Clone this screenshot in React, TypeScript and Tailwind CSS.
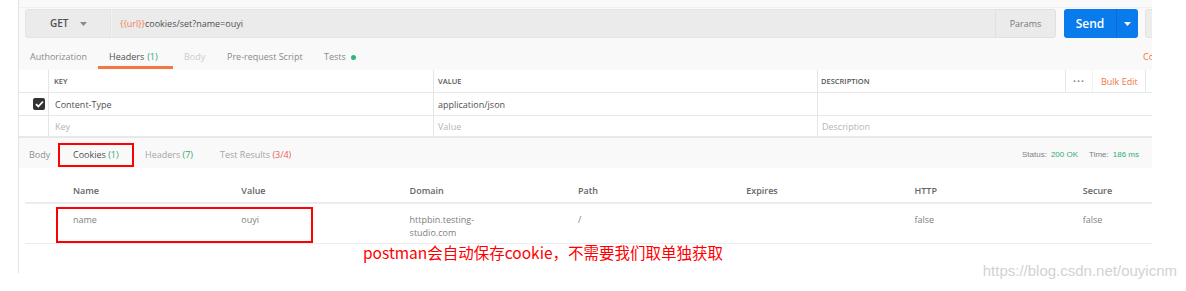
const reqTabs = [
  { label: 'Authorization', w: 'w-[79px]', cls: 'text-[#8a8a8a]' },
  { label: 'Headers', count: '(1)', w: 'w-[75px]', cls: 'text-[#505050]', active: true },
  { label: 'Body', w: 'w-[43px]', cls: 'text-[#cccccc]' },
  { label: 'Pre-request Script', w: 'w-[97px]', cls: 'text-[#8a8a8a]' },
]

const cookieCols = ['Name', 'Value', 'Domain', 'Path', 'Expires', 'HTTP', 'Secure']

function Caret({ className }: { className: string }) {
  return (
    <svg width="7" height="4" viewBox="0 0 7 4" className={className}>
      <path d="M0 0h7L3.5 4z" fill="currentColor" />
    </svg>
  )
}

function Check() {
  return (
    <div className="w-[12px] h-[12px] rounded-[2px] bg-[#333333] flex items-center justify-center">
      <svg width="9" height="8" viewBox="0 0 9 8">
        <path d="M1 4.2l2.3 2.3L8 1.5" stroke="white" strokeWidth="1.8" fill="none" />
      </svg>
    </div>
  )
}

export default function App() {
  return (
    <div className="relative w-[1186px] h-[291px] bg-white overflow-hidden font-['Open_Sans',sans-serif]">
      <div className="ml-[18px] w-[1134px] h-[273px] border-l border-[#e3e3e3] bg-[#f9f9f9] overflow-hidden flex flex-col">
        {/* request url bar */}
        <div className="border-t border-[#f1f1f1] mt-[7px] pt-[1px]" />
        <div className="flex h-[29px] ml-[6px] shrink-0">
          <div className="w-[86px] shrink-0 flex items-center bg-[#ebebeb] border border-[#e4e4e4] rounded-l-[3px] pl-[24px]">
            <span className="text-[10px] text-[#505050] font-semibold">GET</span>
            <Caret className="ml-[11px] text-[#8a8a8a]" />
          </div>
          <div className="w-[884px] shrink-0 flex items-center bg-[#ebebeb] border-y border-l border-[#e4e4e4] border-l-[#f2f2f2] pl-[8px] text-[9px] whitespace-nowrap">
            <span className="text-[#f0814f]">{'{{url}}'}</span>
            <span className="text-[#505050]">cookies/set?name=ouyi</span>
          </div>
          <div className="w-[61px] shrink-0 flex items-center justify-center bg-[#ebebeb] border border-[#e0e0e0] rounded-r-[3px] text-[9px] text-[#777777]">
            Params
          </div>
          <div className="ml-[8px] w-[74px] shrink-0 flex bg-[#097bed] rounded-[3px]">
            <div className="w-[52px] flex items-center justify-center text-white text-[12px] font-semibold">Send</div>
            <div className="flex-1 border-l border-[#0a6ad6] flex items-center justify-center">
              <Caret className="text-white" />
            </div>
          </div>
          <div className="ml-[7px] w-[80px] shrink-0 bg-[#ededed] border border-[#e2e2e2] rounded-[3px]" />
        </div>

        {/* request tabs */}
        <div className="flex h-[32px] shrink-0 text-[9px]">
          {reqTabs.map((t) => (
            <div key={t.label} className={`relative ${t.w} shrink-0 flex items-center pl-[11px] pt-[6px] whitespace-nowrap ${t.cls}`}>
              {t.label}
              {t.count && <span className="ml-[3px] text-[#2fa877]">{t.count}</span>}
              {t.active && <div className="absolute left-0 right-0 bottom-[1px] h-[3px] bg-[#f47645]" />}
            </div>
          ))}
          <div className="shrink-0 flex items-center pl-[11px] pt-[6px] text-[#8a8a8a]">
            Tests
            <span className="ml-[5px] w-[5px] h-[5px] rounded-full bg-[#2fb67a]" />
          </div>
          <div className="ml-auto w-[9px] shrink-0 flex items-center pt-[6px] whitespace-nowrap text-[#f47645]">Cookies</div>
        </div>

        {/* headers table */}
        <div className="bg-white shrink-0 text-[9px]">
          <div className="flex h-[23px] border-b border-[#e8e8e8]">
            <div className="w-[30px] shrink-0 border-r border-[#e6e6e6]" />
            <div className="w-[385px] shrink-0 border-r border-[#e6e6e6] flex items-center pl-[5px] pt-[1px] text-[7.5px] font-semibold text-[#555555]">KEY</div>
            <div className="w-[384px] shrink-0 border-r border-[#e6e6e6] flex items-center pl-[4px] pt-[1px] text-[7.5px] font-semibold text-[#555555]">VALUE</div>
            <div className="w-[248px] shrink-0 border-r border-[#e6e6e6] flex items-center pl-[3px] pt-[1px] text-[7.5px] font-semibold text-[#555555]">DESCRIPTION</div>
            <div className="w-[27px] shrink-0 border-r border-[#f2f2f2] flex items-center pl-[7px] text-[#888888] tracking-[1px] text-[8px]">•••</div>
            <div className="w-[53px] shrink-0 border-r border-[#e6e6e6] flex items-center pl-[8px] pt-[1px] text-[#f47645] whitespace-nowrap">Bulk Edit</div>
          </div>
          <div className="flex h-[23px] border-b border-[#e8e8e8]">
            <div className="w-[30px] shrink-0 border-r border-[#e6e6e6] flex items-center pl-[14px]">
              <Check />
            </div>
            <div className="w-[385px] shrink-0 border-r border-[#e6e6e6] flex items-center pl-[6px] pt-[1px] text-[#505050]">Content-Type</div>
            <div className="w-[384px] shrink-0 border-r border-[#e6e6e6] flex items-center pl-[4px] pt-[1px] text-[#505050]">application/json</div>
            <div className="flex-1" />
          </div>
          <div className="flex h-[22px] border-b-2 border-[#e8e8e8]">
            <div className="w-[30px] shrink-0 border-r border-[#e6e6e6]" />
            <div className="w-[385px] shrink-0 border-r border-[#e6e6e6] flex items-center pl-[6px] pt-[1px] text-[#b5b5b5]">Key</div>
            <div className="w-[384px] shrink-0 border-r border-[#e6e6e6] flex items-center pl-[4px] pt-[1px] text-[#b5b5b5]">Value</div>
            <div className="flex-1 flex items-center pl-[4px] pt-[1px] text-[#b5b5b5]">Description</div>
          </div>
        </div>

        {/* response tabs */}
        <div className="mt-[3px] flex h-[27px] pt-[1px] shrink-0 items-center text-[9px] whitespace-nowrap">
          <div className="w-[43px] shrink-0 pl-[10px] text-[#8f8f8f]">Body</div>
          <div className="w-[72px] shrink-0 pl-[11px] text-[#505050]">
            Cookies <span className="text-[#2fa877]">(1)</span>
          </div>
          <div className="w-[75px] shrink-0 pl-[11px] text-[#a5a5a5]">
            Headers <span className="text-[#2fa877]">(7)</span>
          </div>
          <div className="shrink-0 pl-[11px] text-[#a5a5a5]">
            Test Results <span className="text-[#ed5a56]">(3/4)</span>
          </div>
          <div className="ml-auto pr-[13px] flex items-center font-['Liberation_Sans',Arial,sans-serif] text-[8px] text-[#808080]">
            Status: <span className="ml-[4px] text-[#2fae74]">200 OK</span>
            <span className="ml-[11px]">Time:</span>
            <span className="ml-[4px] text-[#2fae74]">186 ms</span>
          </div>
        </div>

        {/* cookies table */}
        <div className="flex-1 bg-white text-[9px]">
          <div className="ml-[6px] h-[36px] pt-[12px] pl-[48px] flex items-center border-b-2 border-[#ececec] whitespace-nowrap">
            {cookieCols.map((c) => (
              <div key={c} className="w-[168.3px] shrink-0 font-semibold text-[#666666]">{c}</div>
            ))}
          </div>
          <div className="ml-[6px] h-[40px] pt-[9px] pl-[48px] flex items-start border-b border-[#ececec] leading-[13px] text-[#808080]">
            <div className="w-[168.3px] shrink-0">name</div>
            <div className="w-[168.3px] shrink-0">ouyi</div>
            <div className="w-[168.3px] shrink-0">httpbin.testing-<br />studio.com</div>
            <div className="w-[168.3px] shrink-0">/</div>
            <div className="w-[168.3px] shrink-0" />
            <div className="w-[168.3px] shrink-0">false</div>
            <div className="w-[168.3px] shrink-0">false</div>
          </div>
          <div className="pl-[344px] text-[15.5px] leading-[16px] text-[#ff0000] whitespace-nowrap font-['Noto_Sans_CJK_SC','Noto_Sans',sans-serif]">
            postman会自动保存cookie，不需要我们取单独获取
          </div>
        </div>
      </div>

      {/* annotations */}
      <div className="absolute left-[58px] top-[143px] w-[76px] h-[24px] border-2 border-[#ff0000]" />
      <div className="absolute left-[56px] top-[207px] w-[257px] h-[36px] border-2 border-[#ff0000]" />
      <div className="absolute right-[9px] top-[262px] text-[15px] leading-[18px] text-[#d2d2d2] font-['Liberation_Sans',Arial,sans-serif]">
        https://blog.csdn.net/ouyicnm
      </div>
    </div>
  )
}
